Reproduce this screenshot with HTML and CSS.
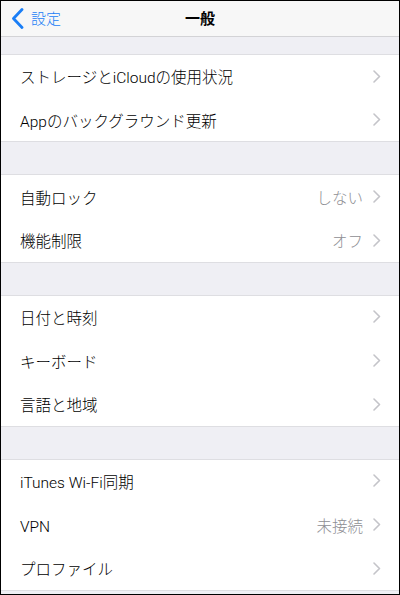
FILE: index.html
```html
<!DOCTYPE html>
<html lang="ja">
<head>
<meta charset="utf-8">
<link rel="stylesheet" href="styles.css">
</head>
<body>
<div class="screen">
  <header class="nav">
    <div class="back">
      <svg class="back-icon" width="13" height="21" viewBox="0 0 13 21"><path d="M11 1.5 L2.5 10.5 L11 19.5" fill="none" stroke="#1a7ef6" stroke-width="2.8" stroke-linecap="round" stroke-linejoin="round"/></svg>
      <span class="back-label">設定</span>
    </div>
    <div class="title">一般</div>
  </header>

  <section class="group first">
    <div class="row"><span class="label">ストレージと<span class="lat">iCloud</span>の使用状況</span><svg class="chev" width="8" height="13" viewBox="0 0 8 13"><path d="M1 1 L6.5 6.5 L1 12" /></svg></div>
    <div class="row"><span class="label"><span class="lat">App</span>のバックグラウンド更新</span><svg class="chev" width="8" height="13" viewBox="0 0 8 13"><path d="M1 1 L6.5 6.5 L1 12" /></svg></div>
  </section>

  <section class="group">
    <div class="row"><span class="label">自動ロック</span><span class="value">しない</span><svg class="chev" width="8" height="13" viewBox="0 0 8 13"><path d="M1 1 L6.5 6.5 L1 12" /></svg></div>
    <div class="row"><span class="label">機能制限</span><span class="value">オフ</span><svg class="chev" width="8" height="13" viewBox="0 0 8 13"><path d="M1 1 L6.5 6.5 L1 12" /></svg></div>
  </section>

  <section class="group">
    <div class="row"><span class="label">日付と時刻</span><svg class="chev" width="8" height="13" viewBox="0 0 8 13"><path d="M1 1 L6.5 6.5 L1 12" /></svg></div>
    <div class="row"><span class="label">キーボード</span><svg class="chev" width="8" height="13" viewBox="0 0 8 13"><path d="M1 1 L6.5 6.5 L1 12" /></svg></div>
    <div class="row"><span class="label">言語と地域</span><svg class="chev" width="8" height="13" viewBox="0 0 8 13"><path d="M1 1 L6.5 6.5 L1 12" /></svg></div>
  </section>

  <section class="group">
    <div class="row"><span class="label"><span class="lat">iTunes Wi-Fi</span>同期</span><svg class="chev" width="8" height="13" viewBox="0 0 8 13"><path d="M1 1 L6.5 6.5 L1 12" /></svg></div>
    <div class="row"><span class="label"><span class="lat">VPN</span></span><span class="value">未接続</span><svg class="chev" width="8" height="13" viewBox="0 0 8 13"><path d="M1 1 L6.5 6.5 L1 12" /></svg></div>
    <div class="row"><span class="label">プロファイル</span><svg class="chev" width="8" height="13" viewBox="0 0 8 13"><path d="M1 1 L6.5 6.5 L1 12" /></svg></div>
  </section>
</div>
</body>
</html>
```
FILE: styles.css
```css
html, body {
  margin: 0;
  padding: 0;
}
body {
  width: 400px;
  height: 595px;
  overflow: hidden;
  font-family: "Noto Sans CJK JP", sans-serif;
}
.screen {
  box-sizing: border-box;
  width: 400px;
  height: 595px;
  border: 1px solid #000;
  background: #efeff4;
  overflow: hidden;
}
.nav {
  height: 35px;
  background: #f7f7f7;
  border-bottom: 1px solid #d3d3d6;
  display: flex;
  align-items: center;
  justify-content: center;
  position: relative;
}
.back {
  position: absolute;
  left: 10px;
  top: 0;
  height: 35px;
  display: flex;
  align-items: center;
  gap: 7px;
}
.back-icon {
  display: block;
  margin-top: -1px;
}
.back-label {
  color: #1a7ef6;
  font-size: 15px;
  line-height: 1;
  font-weight: 300;
  margin-top: -3px;
}
.title {
  font-size: 15px;
  font-weight: bold;
  color: #000;
  line-height: 1;
  margin-top: -3px;
}
.group {
  background: #fff;
  border-top: 1px solid #dedee2;
  border-bottom: 1px solid #dedee2;
  margin-top: 32px;
}
.group.first {
  margin-top: 17px;
}
.row {
  height: 42.67px;
  display: flex;
  align-items: center;
  padding: 0 18px 0 19px;
  font-size: 15.5px;
  font-weight: 300;
  color: #000;
}
.row + .row {
  border-top: 1px solid transparent;
  background-image: linear-gradient(#e3e3e6, #e3e3e6);
  background-repeat: no-repeat;
  background-size: calc(100% - 19px) 1px;
  background-position: 19px -1px;
  background-origin: border-box;
}
.label {
  flex: 1;
  white-space: nowrap;
}
.lat {
  font-family: Roboto, "Liberation Sans", sans-serif;
  font-weight: 300;
}
.value {
  color: #8e8e93;
  margin-right: 10px;
}
.chev {
  display: block;
  fill: none;
  stroke: #c4c4c9;
  stroke-width: 1.6;
  stroke-linecap: round;
  stroke-linejoin: round;
}
```
